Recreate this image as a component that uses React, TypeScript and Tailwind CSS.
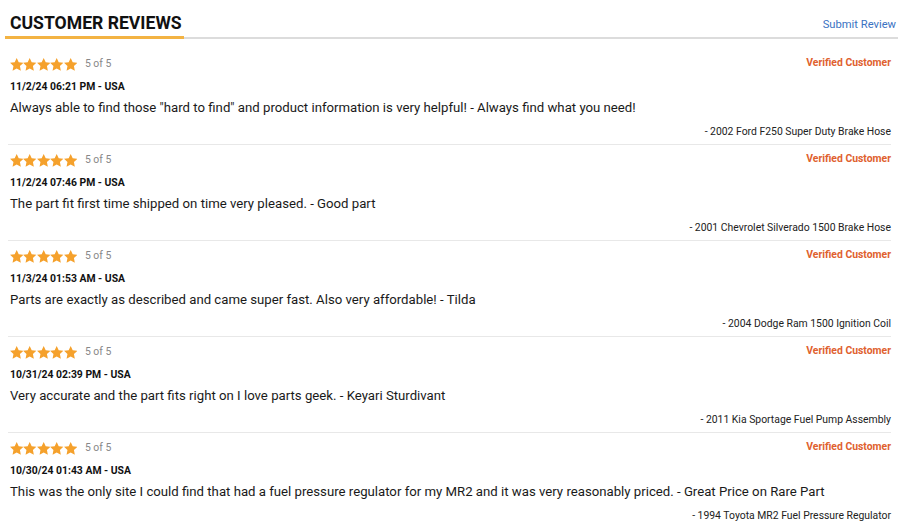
import React from "react";

const reviews = [
  {
    date: "11/2/24 06:21 PM - USA",
    text: 'Always able to find those "hard to find" and product information is very helpful! - Always find what you need!',
    vehicle: "- 2002 Ford F250 Super Duty Brake Hose",
  },
  {
    date: "11/2/24 07:46 PM - USA",
    text: "The part fit first time shipped on time very pleased. - Good part",
    vehicle: "- 2001 Chevrolet Silverado 1500 Brake Hose",
  },
  {
    date: "11/3/24 01:53 AM - USA",
    text: "Parts are exactly as described and came super fast. Also very affordable! - Tilda",
    vehicle: "- 2004 Dodge Ram 1500 Ignition Coil",
  },
  {
    date: "10/31/24 02:39 PM - USA",
    text: "Very accurate and the part fits right on I love parts geek. - Keyari Sturdivant",
    vehicle: "- 2011 Kia Sportage Fuel Pump Assembly",
  },
  {
    date: "10/30/24 01:43 AM - USA",
    text: "This was the only site I could find that had a fuel pressure regulator for my MR2 and it was very reasonably priced. - Great Price on Rare Part",
    vehicle: "- 1994 Toyota MR2 Fuel Pressure Regulator",
  },
];

function Star() {
  return (
    <svg width="13.4" height="13" viewBox="0 0 24 23" className="block">
      <path
        d="M12 0l3.6 7.5 8.3 1-6.1 5.8 1.6 8.2L12 18.5l-7.4 4 1.6-8.2L0.1 8.5l8.3-1z"
        fill="#f5a12c"
      />
    </svg>
  );
}

export default function App() {
  return (
    <div
      className="w-[903px] h-[523px] bg-white overflow-hidden"
      style={{ fontFamily: "Roboto, 'Liberation Sans', sans-serif" }}
    >
      <div className="mx-[5px] pt-[11px] flex items-end justify-between border-b-2 border-[#dcdcdc]">
        <div className="px-[5px] pb-[1px] -mb-[2px] border-b-[3px] border-[#f3b343] w-[179px]">
          <h1 className="text-[17.6px] leading-[24px] font-bold text-[#111] whitespace-nowrap">
            CUSTOMER REVIEWS
          </h1>
        </div>
        <a className="text-[11.2px] leading-[16px] text-[#3a72c2] mb-[4px] mr-[2px]">Submit Review</a>
      </div>
      <div className="ml-[8px] w-[883px] mt-[10px]">
        {reviews.map((r, i) => (
          <div key={i} className="pt-[8px] pb-[5px] border-b border-[#e8e8e8] pl-[2px]">
            <div className="flex items-center justify-between h-[14px]">
              <div className="flex items-center">
                <div className="flex">
                  <Star />
                  <Star />
                  <Star />
                  <Star />
                  <Star />
                </div>
                <span className="ml-[8px] text-[10.4px] text-[#888]">5 of 5</span>
              </div>
              <span className="text-[10.4px] font-bold text-[#e0612f] -mt-[2px]">Verified Customer</span>
            </div>
            <div className="mt-[9px] text-[10.4px] leading-[14px] font-bold text-[#111]">{r.date}</div>
            <div className="mt-[5px] text-[13.2px] leading-[18px] text-[#1a1a1a] whitespace-nowrap">{r.text}</div>
            <div className="mt-[8px] text-[10.4px] leading-[14px] text-[#222] text-right">{r.vehicle}</div>
          </div>
        ))}
      </div>
    </div>
  );
}
